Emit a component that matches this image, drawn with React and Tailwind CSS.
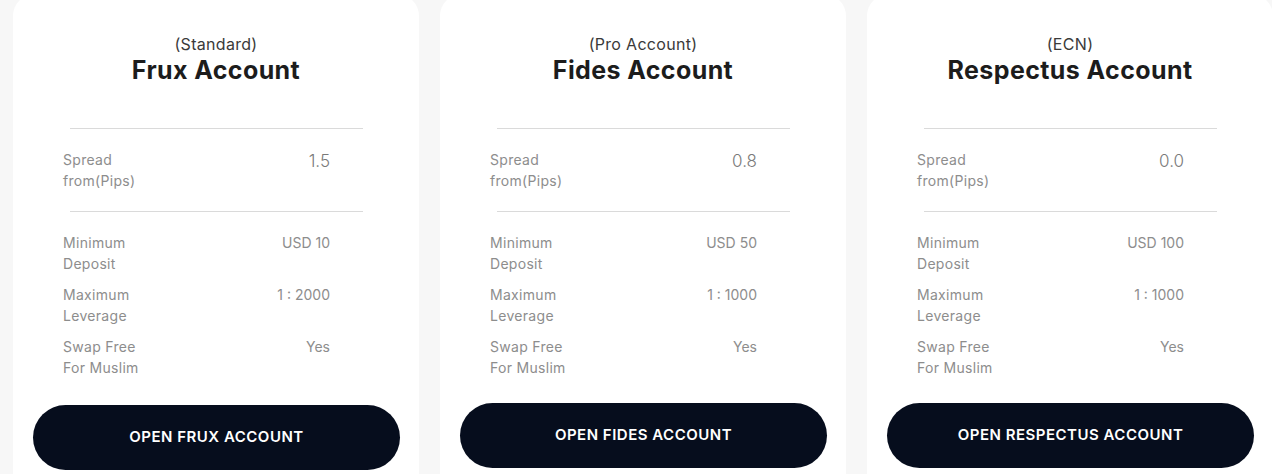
import React from 'react';

const accounts = [
  {
    tier: '(Standard)',
    name: 'Frux Account',
    spread: '1.5',
    deposit: 'USD 10',
    leverage: '1 : 2000',
    button: 'Open Frux Account',
    btnOffset: 'mt-[27px]',
  },
  {
    tier: '(Pro Account)',
    name: 'Fides Account',
    spread: '0.8',
    deposit: 'USD 50',
    leverage: '1 : 1000',
    button: 'Open Fides Account',
    btnOffset: 'mt-[25px]',
  },
  {
    tier: '(ECN)',
    name: 'Respectus Account',
    spread: '0.0',
    deposit: 'USD 100',
    leverage: '1 : 1000',
    button: 'Open Respectus Account',
    btnOffset: 'mt-[25px]',
  },
];

const Row = ({ label, sub, value, big }) => (
  <div className="flex justify-between pl-[50px] pr-[89px]">
    <div className="text-[14px] leading-[21px] tracking-[0.3px] text-[#8d8d8d]">
      {label}
      <br />
      {sub}
    </div>
    <div className={big ? 'text-[17px] leading-[24px] font-light text-[#7a7a7a]' : 'text-[14px] leading-[21px] text-[#8d8d8d]'}>
      {value}
    </div>
  </div>
);

const AccountCard = ({ account }) => (
  <div className="w-[406px] shrink-0 bg-white rounded-[22px] pt-[39px] pb-10">
    <div className="text-center text-[16px] leading-[22px] tracking-[0.3px] text-[#3a3a3a]">{account.tier}</div>
    <div className="text-center text-[25px] leading-[30px] tracking-[0.4px] font-bold text-[#1c1c1c]">{account.name}</div>

    <div className="mt-[43px] ml-[57px] mr-[56px] h-px bg-[#dadada]" />
    <div className="py-[20px]">
      <Row label="Spread" sub="from(Pips)" value={account.spread} big />
    </div>
    <div className="ml-[57px] mr-[56px] h-px bg-[#dadada]" />

    <div className="pt-[20px] flex flex-col gap-[10px]">
      <Row label="Minimum" sub="Deposit" value={account.deposit} />
      <Row label="Maximum" sub="Leverage" value={account.leverage} />
      <Row label="Swap Free" sub="For Muslim" value="Yes" />
    </div>

    <button
      className={`${account.btnOffset} mx-5 w-[367px] h-[65px] rounded-full bg-[#060d1d] text-white text-[15px] font-semibold uppercase tracking-[0.5px] flex items-center justify-center`}
    >
      {account.button}
    </button>
  </div>
);

export default function App() {
  return (
    <div
      className="w-[1272px] h-[474px] overflow-hidden bg-[#f7f7f7]"
      style={{ fontFamily: 'Inter, "Noto Sans", sans-serif' }}
    >
      <div className="flex gap-[21px] pl-[13px] -mt-[6px]">
        {accounts.map((a) => (
          <AccountCard key={a.name} account={a} />
        ))}
      </div>
    </div>
  );
}
